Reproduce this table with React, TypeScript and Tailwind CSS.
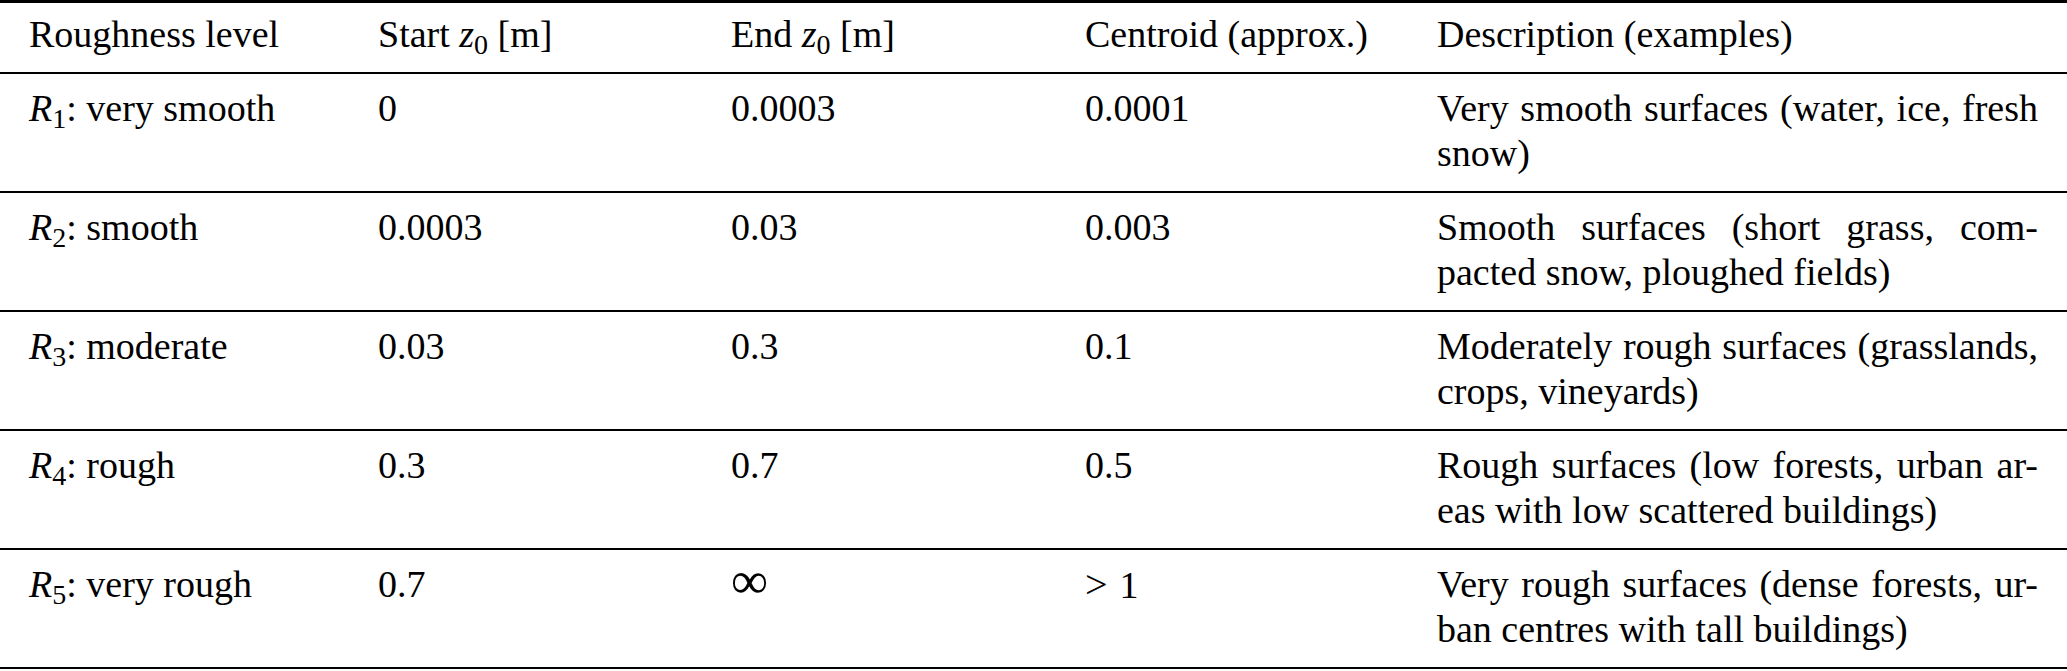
import React from 'react'

type Row = {
  level: number
  name: string
  start: string
  end: React.ReactNode
  centroid: React.ReactNode
  desc: [string, string]
}

const rows: Row[] = [
  { level: 1, name: 'very smooth', start: '0', end: '0.0003', centroid: '0.0001', desc: ['Very smooth surfaces (water, ice, fresh', 'snow)'] },
  { level: 2, name: 'smooth', start: '0.0003', end: '0.03', centroid: '0.003', desc: ['Smooth surfaces (short grass, com-', 'pacted snow, ploughed fields)'] },
  { level: 3, name: 'moderate', start: '0.03', end: '0.3', centroid: '0.1', desc: ['Moderately rough surfaces (grasslands,', 'crops, vineyards)'] },
  { level: 4, name: 'rough', start: '0.3', end: '0.7', centroid: '0.5', desc: ['Rough surfaces (low forests, urban ar-', 'eas with low scattered buildings)'] },
  {
    level: 5,
    name: 'very rough',
    start: '0.7',
    end: <span className="text-[52px] leading-[0] relative top-[1px]">∞</span>,
    centroid: (
      <>
        <span className="text-[40px]">&gt;</span>
        <span className="ml-[12px]">1</span>
      </>
    ),
    desc: ['Very rough surfaces (dense forests, ur-', 'ban centres with tall buildings)'],
  },
]

const cols = 'grid grid-cols-[349px_353px_354px_352px_601px] px-[29px]'

function Z0() {
  return (
    <>
      <i>z</i>
      <sub className="text-[28px]">0</sub>
    </>
  )
}

export default function App() {
  return (
    <div className="w-[2067px] h-[671px] bg-white text-black font-['Liberation_Serif',serif] text-[38px] leading-[45px]">
      <div className="border-t-[3px] border-black">
        {/* header */}
        <div className={`${cols} pt-[9px] pb-[15px]`}>
          <div>Roughness level</div>
          <div>Start <Z0 /> [m]</div>
          <div>End <Z0 /> [m]</div>
          <div>Centroid (approx.)</div>
          <div>Description (examples)</div>
        </div>

        {rows.map((r) => (
          <div key={r.level} className={`${cols} border-t-2 border-black pt-[12px] pb-[15px]`}>
            <div>
              <i>R</i>
              <sub className="text-[28px]">{r.level}</sub>: {r.name}
            </div>
            <div>{r.start}</div>
            <div>{r.end}</div>
            <div>{r.centroid}</div>
            <div>
              <div className="text-justify [text-align-last:justify]">{r.desc[0]}</div>
              <div>{r.desc[1]}</div>
            </div>
          </div>
        ))}
        <div className="border-t-2 border-black" />
      </div>
    </div>
  )
}
